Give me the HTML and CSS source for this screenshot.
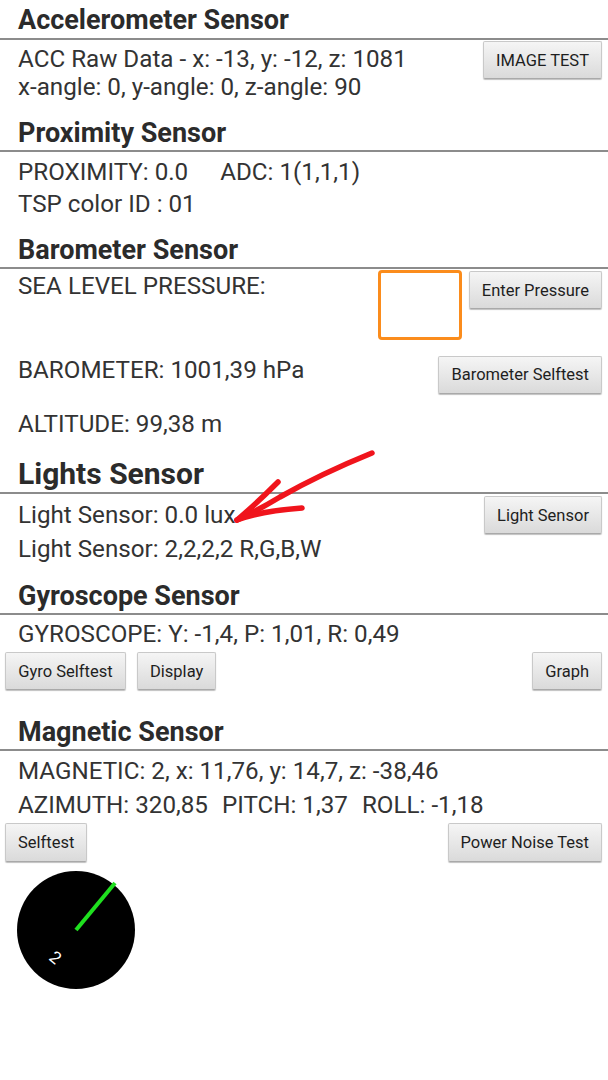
FILE: index.html
```html
<!DOCTYPE html>
<html lang="en">
<head>
    <meta charset="UTF-8">
    <meta name="viewport" content="width=device-width, initial-scale=1.0">
    <title>Sensor Test</title>
    <link rel="stylesheet" href="styles.css">
</head>
<body>
    <div class="page">
        <div class="head first">Accelerometer Sensor</div>
        <div class="body acc">
            <div class="lines">
                <div>ACC Raw Data - x: -13, y: -12, z: 1081</div>
                <div>x-angle: 0, y-angle: 0, z-angle: 90</div>
            </div>
            <div class="btn">IMAGE TEST</div>
        </div>

        <div class="head">Proximity Sensor</div>
        <div class="body prox">
            <div class="row"><span class="gap">PROXIMITY: 0.0</span><span>ADC: 1(1,1,1)</span></div>
            <div class="row">TSP color ID : 01</div>
        </div>

        <div class="head">Barometer Sensor</div>
        <div class="body baro">
            <div class="row-sea">
                <div class="txt">SEA LEVEL PRESSURE:</div>
                <div class="right">
                    <div class="input"></div>
                    <div class="btn">Enter Pressure</div>
                </div>
            </div>
            <div class="row row-baro">
                <span>BAROMETER: 1001,39 hPa</span>
                <div class="btn">Barometer Selftest</div>
            </div>
            <div class="row row-alt">ALTITUDE: 99,38 m</div>
        </div>

        <div class="head big">Lights Sensor</div>
        <div class="body lights">
            <div class="row">
                <span>Light Sensor: 0.0 lux</span>
                <div class="btn">Light Sensor</div>
            </div>
            <div class="row">Light Sensor: 2,2,2,2 R,G,B,W</div>
        </div>

        <div class="head">Gyroscope Sensor</div>
        <div class="body gyro">
            <div class="row">GYROSCOPE: Y: -1,4, P: 1,01, R: 0,49</div>
            <div class="btn-row">
                <div class="btn wide">Gyro Selftest</div>
                <div class="btn">Display</div>
                <div class="btn push">Graph</div>
            </div>
        </div>

        <div class="head">Magnetic Sensor</div>
        <div class="body mag">
            <div class="row">MAGNETIC: 2, x: 11,76, y: 14,7, z: -38,46</div>
            <div class="row"><span class="sp">AZIMUTH: 320,85</span><span class="sp">PITCH: 1,37</span><span>ROLL: -1,18</span></div>
            <div class="btn-row">
                <div class="btn">Selftest</div>
                <div class="btn push">Power Noise Test</div>
            </div>
            <svg class="compass" width="118" height="118" viewBox="0 0 118 118">
                <circle cx="59" cy="59" r="59" fill="#000"/>
                <line x1="59" y1="59" x2="98" y2="12" stroke="#1fe01f" stroke-width="4"/>
                <text x="34" y="92" fill="#fff" font-size="17" font-family="Roboto, sans-serif" transform="rotate(40 38 86)">2</text>
            </svg>
        </div>

        <!-- hand drawn arrow over the light sensor value -->
        <svg class="scribble" width="170" height="100" viewBox="0 0 170 100">
            <g fill="none" stroke="#f0141c" stroke-width="5.5" stroke-linecap="round" stroke-linejoin="round">
                <path d="M152 13 C 120 26, 90 40, 60 57 C 45 66, 30 74, 17 80"/>
                <path d="M58 42 C 48 52, 36 64, 17 80"/>
                <path d="M17 80 C 30 75, 55 70, 82 68"/>
            </g>
        </svg>
    </div>
</body>
</html>
```

FILE: styles.css
```css
body {
    margin: 0;
    background-color: #fff;
    color: #333;
    font-family: Roboto, "Noto Sans", Arial, sans-serif;
}

.page {
    position: relative;
    width: 608px;
    height: 1080px;
}

.head {
    height: 36px;
    line-height: 38px;
    padding-left: 18px;
    font-size: 27px;
    font-weight: bold;
    color: #2b2b2b;
    border-bottom: 2px solid #8c8c8c;
}

.head.first {
    height: 38px;
    line-height: 40px;
}

.head.big {
    height: 38px;
    line-height: 40px;
    font-size: 30px;
}

.body {
    font-size: 24.2px;
    padding-left: 18px;
    padding-right: 6px;
}

.row {
    height: 34px;
    display: flex;
    align-items: center;
    justify-content: space-between;
    white-space: nowrap;
}

.btn {
    height: 38px;
    box-sizing: border-box;
    padding: 0 12px;
    display: flex;
    align-items: center;
    justify-content: center;
    font-size: 16.5px;
    color: #1e1e1e;
    background: linear-gradient(#f5f5f5, #dadada);
    border: 1px solid #c9c9c9;
    border-bottom-color: #a9a9a9;
    border-radius: 2px;
    box-shadow: 0 1px 1px rgba(0, 0, 0, 0.25);
    white-space: nowrap;
}

.btn.wide {
    min-width: 121px;
}

/* accelerometer */
.acc {
    display: flex;
    justify-content: space-between;
    align-items: flex-start;
    padding-top: 5px;
    padding-bottom: 13px;
}

.acc .lines {
    line-height: 28px;
}

.acc .btn {
    margin-top: -4px;
}

/* proximity */
.prox {
    padding-top: 4px;
    padding-bottom: 11px;
}

.prox .row {
    height: 32px;
    justify-content: flex-start;
}

.prox .gap {
    margin-right: 32px;
}

/* barometer */
.baro {
    padding-bottom: 13px;
}

.row-sea {
    display: flex;
    justify-content: space-between;
    align-items: flex-start;
    height: 71px;
}

.row-sea .txt {
    line-height: 34px;
}

.row-sea .right {
    display: flex;
    align-items: flex-start;
    gap: 7px;
}

.input {
    width: 84px;
    height: 70px;
    margin-top: 1px;
    box-sizing: border-box;
    border: 3px solid #fb8c1c;
    border-radius: 4px;
    background-color: #fff;
}

.row-sea .btn {
    margin-top: 2px;
}

.row-baro {
    margin-top: 13px;
}

.row-baro .btn {
    margin-top: 9px;
}

.row-alt {
    margin-top: 20px;
}

/* lights */
.lights {
    padding-top: 4px;
    padding-bottom: 11px;
}

/* gyroscope */
.gyro {
    padding-top: 2px;
    padding-bottom: 23px;
}

.btn-row {
    display: flex;
    gap: 11px;
    margin-left: -13px;
    margin-top: 1px;
}

.btn-row .push {
    margin-left: auto;
}

/* magnetic */
.mag {
    padding-top: 3px;
}

.mag .row {
    justify-content: flex-start;
}

.mag .sp {
    margin-right: 14px;
}

.mag .btn-row .btn {
    height: 39px;
}

.compass {
    display: block;
    margin-top: 9px;
    margin-left: -1px;
}

.scribble {
    position: absolute;
    left: 220px;
    top: 440px;
}
```
